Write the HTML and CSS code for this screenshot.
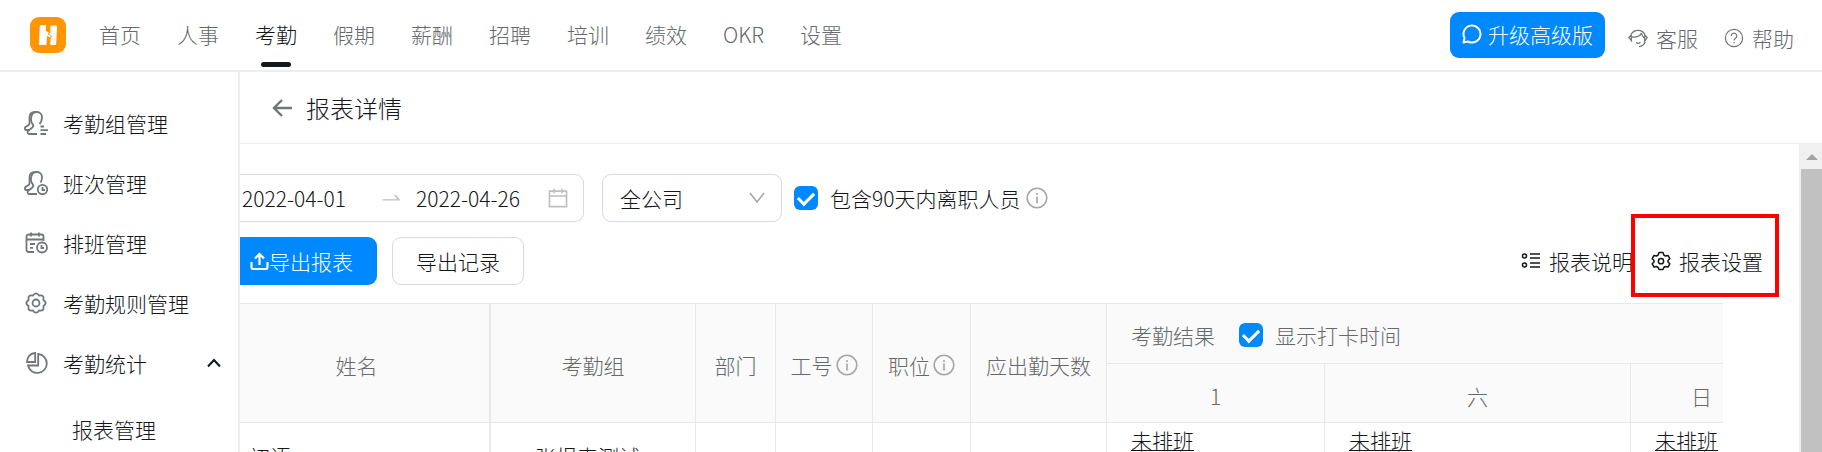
FILE: index.html
```html
<!DOCTYPE html>
<html lang="zh-CN">
<head>
    <meta charset="UTF-8">
    <meta name="viewport" content="width=device-width, initial-scale=1.0">
    <title>报表详情</title>
    <link rel="stylesheet" href="styles.css">
</head>
<body>
    <header class="header">
        <a class="logo" href="#" aria-label="首页">
            <svg width="36" height="36" viewBox="0 0 36 36">
                <rect width="36" height="36" rx="9" fill="#ff9500"/>
                <path fill="#fff" d="M11 8h4q1 0 1 1l-.2 5 3.200 1.500-1.500 2 3.500 1.500-.8 1.500-3.200-1.500-.5 8q0 1-1 1H10q-1 0-1-1l.8-18q.1-1 1.200-1zM21.500 8.500H26q1 0 1 1l-.8 17.500q0 1-1 1h-4q-1 0-1-1l.3-5 1.500-3-3-1.500 1.300-2 .200-6q0-1 1-1z"/>
            </svg>
        </a>
        <nav class="nav">
            <a href="#">首页</a>
            <a href="#">人事</a>
            <a class="active" href="#">考勤</a>
            <a href="#">假期</a>
            <a href="#">薪酬</a>
            <a href="#">招聘</a>
            <a href="#">培训</a>
            <a href="#">绩效</a>
            <a href="#">OKR</a>
            <a href="#">设置</a>
        </nav>
        <button class="upgrade" type="button">
            <svg width="20" height="20" viewBox="0 0 20 20" fill="none" stroke="#fff" stroke-width="2"><path d="M1.500 18.500L2.500 14a8.500 8.500 0 1 1 3.500 3.500z" stroke-linejoin="round"/></svg>
            升级高级版
        </button>
        <a class="help" href="#">
            <svg width="20" height="20" viewBox="0 0 20 20" fill="none" stroke="#737678" stroke-width="1.3">
                <path d="M3 6.500A8 8 0 0 1 17 6.500M17.300 14a8 8 0 0 1-6.300 4.700"/>
                <path d="M3.200 7L.8 9.500l2.600 3.200zM16.800 7l2.400 2.500-2.600 3.800z"/>
                <path d="M4 9c4.500.3 8.500-1.200 9.500-4 .2 2.500 1.500 3.800 2.500 5M8 14.500q2.200 1.800 4.500 0"/>
            </svg>
            客服
        </a>
        <a class="help" href="#">
            <svg width="20" height="20" viewBox="0 0 20 20" fill="none" stroke="#737678" stroke-width="1.2">
                <circle cx="10" cy="10" r="8.600"/>
                <path d="M7.200 8a2.800 2.800 0 1 1 4.300 2.300c-1 .7-1.500 1.100-1.500 2.300M10 14v1.400"/>
            </svg>
            帮助
        </a>
    </header>

    <div class="container">
        <aside class="sidebar">
            <a class="menu-item" href="#">
                <svg width="24" height="24" viewBox="0 0 24 24">
                    <path d="M8 1.500C5 3 5.500 6 5.500 8.500c0 3 .5 4-.5 5.200L1.500 16c-1 1-.8 3 .5 3h3.500"/>
                    <path d="M9 13.500c-2-2-2.300-5-1.800-7.500C7.800 2.500 10 1 12.500 1S18 2.500 18 6s-1 5.500-2.500 7M9 13.500c.8 1.500 0 2.700-1.500 3.700L4.500 19.500c-1.500 1.200-1 3.500.5 3.500h8M8 1.500C9 1 11 1 12 1M16.500 15.500H20M16.500 19.200H24M16.500 23H22"/>
                </svg>
                考勤组管理
            </a>
            <a class="menu-item" href="#">
                <svg width="24" height="24" viewBox="0 0 24 24">
                    <path d="M8 1.500C5 3 5.500 6 5.500 8.500c0 3 .5 4-.5 5.200L1.500 16c-1 1-.8 3 .5 3h3.500"/>
                    <path d="M9 13.500c-2-2-2.300-5-1.800-7.500C7.800 2.500 10 1 12.500 1S18 2.500 18 6s-.5 4-1.500 5.500M9 13.500c.8 1.500 0 2.700-1.500 3.700L4.500 19.500c-1.500 1.200-1 3.500.5 3.500h8M8 1.500C9 1 11 1 12 1"/>
                    <circle cx="18.500" cy="18.500" r="4.700"/>
                    <path d="M18.500 16v3H21"/>
                </svg>
                班次管理
            </a>
            <a class="menu-item" href="#">
                <svg width="24" height="24" viewBox="0 0 24 24">
                    <path d="M10 21H5q-2.500 0-2.500-2.500V5.500Q2.500 3.500 5 3.500h12.500q2 0 2 2V10M2.500 8.500h17M7 1.500v4M15 1.500v4M6 13h5M6 16.800h3"/>
                    <circle cx="18" cy="16.500" r="5"/>
                    <path d="M17.500 14v3H20"/>
                </svg>
                排班管理
            </a>
            <a class="menu-item" href="#">
                <svg width="24" height="24" viewBox="0 0 24 24">
                    <path d="M8.900 4.600Q12 0 15.100 4.600Q20.500 3.500 19.400 8.900Q24 12 19.400 15.100Q20.500 20.500 15.100 19.400Q12 24 8.900 19.400Q3.500 20.500 4.600 15.100Q0 12 4.600 8.900Q3.500 3.500 8.900 4.600z"/>
                    <circle cx="12" cy="12" r="3.500"/>
                </svg>
                考勤规则管理
            </a>
            <a class="menu-item" href="#">
                <svg width="24" height="24" viewBox="0 0 24 24">
                    <path d="M11.200 2v9H3c0-5 3.500-8.800 8.200-9zM4 14.500h10.200V3A9.500 9.500 0 1 1 4 14.500z"/>
                </svg>
                考勤统计
                <svg class="arrow" width="14" height="10" viewBox="0 0 14 10"><path d="M1 8.500L7 2l6 6.500"/></svg>
            </a>
            <a class="menu-item sub" href="#">报表管理</a>
        </aside>

        <main class="main">
            <div class="title-bar">
                <button class="back" type="button" aria-label="返回">
                    <svg width="20" height="20" viewBox="0 0 20 20" fill="none" stroke="#737678" stroke-width="2.4"><path d="M10 2L2 10l8 8M2 10h18"/></svg>
                </button>
                <h1>报表详情</h1>
            </div>

            <div class="page">
                <div class="content">
                    <div class="row filters">
                        <div class="date-range">
                            <input type="text" value="2022-04-01" aria-label="开始日期">
                            <svg class="to" width="22" height="22" viewBox="0 0 1024 1024"><path d="M873 596l-164-208A32 32 0 00684 376h-65c-7 0-10 8-6 13l144 183H80v60h768c27 0 42-20 25-36z"/></svg>
                            <input type="text" value="2022-04-26" aria-label="结束日期">
                            <svg width="24" height="24" viewBox="0 0 1024 1024"><path d="M880 184H712v-64c0-4.400-3.600-8-8-8h-56c-4.400 0-8 3.600-8 8v64H384v-64c0-4.400-3.600-8-8-8h-56c-4.400 0-8 3.600-8 8v64H144c-17.700 0-32 14.300-32 32v664c0 17.700 14.300 32 32 32h736c17.700 0 32-14.300 32-32V216c0-17.700-14.300-32-32-32zm-40 656H184V460h656v380zM184 392V256h128v48c0 4.400 3.600 8 8 8h56c4.400 0 8-3.600 8-8v-48h256v48c0 4.400 3.600 8 8 8h56c4.400 0 8-3.600 8-8v-48h128v136H184z"/></svg>
                        </div>
                        <div class="select-wrap">
                            <select class="select" aria-label="部门范围">
                                <option>全公司</option>
                            </select>
                            <svg class="select-arrow" width="16" height="12" viewBox="0 0 16 12"><path d="M1 1l7 9 7-9"/></svg>
                        </div>
                        <label class="check"><input type="checkbox" checked>包含90天内离职人员</label>
                        <svg class="info" width="22" height="22" viewBox="0 0 22 22"><circle cx="11" cy="11" r="9.800"/><path d="M11 6v2M11 9.500v7"/></svg>
                    </div>

                    <div class="row actions">
                        <button class="button primary" type="button">
                            <svg width="19" height="19" viewBox="0 0 19 19" fill="none" stroke="#fff" stroke-width="2.2"><path d="M1.500 10v5q0 2 2 2h12q2 0 2-2v-5M9.500 13V2.500M5 6.500l4.500-4.500L14 6.500"/></svg>导出报表
                        </button>
                        <button class="button" type="button">导出记录</button>
                        <button class="text-button push" type="button">
                            <svg width="20" height="20" viewBox="0 0 20 20"><circle cx="3.500" cy="5" r="2"/><circle cx="3.500" cy="14" r="2"/><path d="M9 3h10M9 7h10M9 12h10M9 16h10"/></svg>
                            报表说明
                        </button>
                        <button class="text-button marked" type="button">
                            <svg width="20" height="20" viewBox="0 0 20 20"><path d="M8 1.500h4l.8 2.500 1.700 1 2.500-.6 1.800 3.300L17 9.500v1.500l1.800 1.800-1.800 3.300-2.500-.6-1.700 1-.8 2H8l-.8-2-1.700-1-2.500.6-1.800-3.300L3 11V9.500L1.200 7.700 3 4.400l2.500.6 1.700-1z" stroke-linejoin="round"/><circle cx="10" cy="10.200" r="2.600"/></svg>
                            报表设置
                        </button>
                    </div>

                    <div class="table-wrap">
                        <table class="table">
                            <colgroup>
                                <col class="col-name">
                                <col class="col-group">
                                <col class="col-dept">
                                <col class="col-code">
                                <col class="col-post">
                                <col class="col-days">
                                <col class="col-first">
                                <col class="col-sat">
                                <col class="col-sun">
                            </colgroup>
                            <thead>
                                <tr>
                                    <th class="fixed" rowspan="2">姓名</th>
                                    <th rowspan="2">考勤组</th>
                                    <th rowspan="2">部门</th>
                                    <th rowspan="2"><span class="with-info">工号<svg class="info" width="22" height="22" viewBox="0 0 22 22"><circle cx="11" cy="11" r="9.800"/><path d="M11 6v2M11 9.500v7"/></svg></span></th>
                                    <th rowspan="2"><span class="with-info">职位<svg class="info" width="22" height="22" viewBox="0 0 22 22"><circle cx="11" cy="11" r="9.800"/><path d="M11 6v2M11 9.500v7"/></svg></span></th>
                                    <th rowspan="2">应出勤天数</th>
                                    <th class="result" colspan="3">
                                        <div class="result-head">
                                            <span>考勤结果</span>
                                            <label class="check"><input type="checkbox" checked>显示打卡时间</label>
                                        </div>
                                    </th>
                                </tr>
                                <tr class="days">
                                    <th>1</th>
                                    <th>六</th>
                                    <th>日</th>
                                </tr>
                            </thead>
                            <tbody>
                                <tr>
                                    <td class="fixed name">初语</td>
                                    <td class="group">张报表测试</td>
                                    <td></td>
                                    <td></td>
                                    <td></td>
                                    <td></td>
                                    <td class="shift"><a href="#">未排班</a></td>
                                    <td class="shift"><a href="#">未排班</a></td>
                                    <td class="shift"><a href="#">未排班</a></td>
                                </tr>
                            </tbody>
                        </table>
                    </div>
                </div>
                <div class="scrollbar">
                    <div class="scroll-up"></div>
                    <div class="scroll-thumb"></div>
                </div>
            </div>
        </main>
    </div>
</body>
</html>
```

FILE: styles.css
```css
* { box-sizing: border-box; }
body { margin: 0; height: 100vh; display: flex; flex-direction: column; overflow: hidden; background: #fff; color: #14171a; font: 300 21px/30px "Noto Sans CJK SC", sans-serif; }
a { color: inherit; text-decoration: none; }
button, input, select { font: inherit; color: inherit; }
button { cursor: pointer; white-space: nowrap; }
svg { flex: none; }

.header { display: flex; align-items: center; flex: none; height: 72px; padding: 0 28px 0 30px; border-bottom: 2px solid #eee; }
.logo { display: flex; margin-right: 33px; }
.nav { display: flex; gap: 36px; flex: 1; align-self: stretch; color: #66696b; }
.nav a { display: flex; flex-direction: column; align-items: center; padding-top: 19px; white-space: nowrap; }
.nav .active { color: #14171a; }
.nav .active::after { content: ""; width: 30px; height: 5px; margin-top: 13px; border-radius: 3px; background: #14171a; }
.upgrade { display: flex; align-items: center; gap: 6px; height: 46px; margin-right: 23px; padding: 0 12px 2px; border: none; border-radius: 9px; background: #08f; color: #fff; }
.help { display: flex; align-items: center; gap: 8px; padding-top: 6px; color: #66696b; white-space: nowrap; }
.help + .help { margin-left: 26px; }

.container { display: flex; flex: 1; min-height: 0; }
.sidebar { flex: none; width: 240px; padding-top: 21px; border-right: 2px solid #eee; }
.menu-item { display: flex; align-items: center; gap: 15px; height: 60px; padding: 0 17px 0 24px; white-space: nowrap; }
.menu-item svg { fill: none; stroke: #737678; stroke-width: 1.8; }
.menu-item .arrow { margin-left: auto; stroke: #14171a; stroke-width: 2; }
.menu-item.sub { margin-top: 6px; padding-left: 72px; }

.main { display: flex; flex-direction: column; flex: 1; min-width: 0; }
.title-bar { display: flex; align-items: center; flex: none; gap: 14px; height: 72px; padding-left: 32px; border-bottom: 1px solid #eee; }
.title-bar h1 { margin: 0; font-size: 24px; font-weight: 300; }
.back { display: flex; padding: 0; border: none; background: none; }
.page { display: flex; flex: 1; min-height: 0; }
.content { flex: 1; min-width: 0; padding-top: 30px; overflow: hidden; }
.row { display: flex; align-items: center; height: 48px; white-space: nowrap; }
.filters { margin-bottom: 15px; }
.actions { margin-bottom: 18px; padding-right: 36px; }

.date-range { display: flex; align-items: center; height: 48px; padding-right: 13px; border: 1px solid #d9d9d9; border-left: none; border-radius: 0 9px 9px 0; fill: #bfbfbf; }
.date-range input { width: 132px; padding: 0 0 0 2px; border: none; background: none; outline: none; }
.date-range .to { margin: 0 11px 0 9px; }
.select-wrap { position: relative; width: 180px; margin: 0 12px 0 18px; }
.select { display: block; width: 100%; height: 48px; padding: 0 40px 0 17px; border: 1px solid #d9d9d9; border-radius: 9px; background: #fff; appearance: none; }
.select-arrow { position: absolute; top: 18px; right: 17px; fill: none; stroke: #a6a6a6; stroke-width: 1.6; pointer-events: none; }
.check { display: flex; align-items: center; gap: 12px; }
.check input { display: flex; align-items: center; justify-content: center; width: 24px; height: 24px; margin: 0; border-radius: 6px; background: #08f; appearance: none; }
.check input:checked::after { content: ""; width: 7px; height: 13px; margin-bottom: 3px; border: solid #fff; border-width: 0 3px 3px 0; transform: rotate(45deg); }
.info { margin-left: 6px; fill: none; stroke: #a6a6a6; stroke-width: 1.6; }

.button { display: flex; align-items: center; justify-content: center; height: 48px; padding: 0 23px; border: 1px solid #d9d9d9; border-radius: 9px; background: #fff; }
.button.primary { margin-right: 15px; padding: 0 24px 0 10px; border: none; border-radius: 0 9px 9px 0; background: #08f; color: #fff; }
.text-button { display: flex; align-items: center; gap: 8px; padding: 0; border: none; background: none; }
.text-button svg { fill: none; stroke: #14171a; stroke-width: 1.5; }
.text-button.push { margin-left: auto; }
.text-button.marked { position: relative; margin-left: 18px; }
.text-button.marked::after { content: ""; position: absolute; inset: -32px -16px -21px -20px; border: 4px solid #f00; }

.table-wrap { margin-right: 76px; overflow: hidden; }
.table { width: 1533px; table-layout: fixed; border-collapse: separate; border-spacing: 0; border-top: 1px solid #e8e8e8; }
.col-name { width: 251px; }
.col-group { width: 205px; }
.col-dept { width: 80px; }
.col-code { width: 97px; }
.col-post { width: 98px; }
.col-days { width: 136px; }
.col-first { width: 218px; }
.col-sat { width: 306px; }
.table th, .table td { padding: 0; border-right: 1px solid #e8e8e8; border-bottom: 1px solid #e8e8e8; white-space: nowrap; }
.table th { height: 60px; padding-top: 4px; background: #fafafa; color: #66696b; font-weight: 300; }
.table .fixed { padding-right: 16px; border-right-width: 2px; }
.table .days th { height: 59px; padding-top: 6px; }
.with-info { display: flex; align-items: center; justify-content: center; }
.with-info .info { margin-left: 3px; }
.table .result { padding: 3px 24px 0; }
.result-head { display: flex; align-items: center; gap: 24px; }
.table td { height: 66px; text-align: left; }
.table .name { padding-left: 9px; }
.table .group { padding-left: 44px; }
.table .shift { padding: 2px 24px 0; vertical-align: top; }
.shift a { text-decoration: underline 1px; text-underline-offset: 1px; }

.scrollbar { flex: none; width: 23px; padding-left: 2px; background: #f0f0f0; }
.scroll-up { display: flex; align-items: center; justify-content: center; height: 25px; }
.scroll-up::before { content: ""; border: solid transparent; border-width: 0 6px 6px; border-bottom-color: #a3a3a3; }
.scroll-thumb { height: 100%; background: #c1c1c1; }
```
